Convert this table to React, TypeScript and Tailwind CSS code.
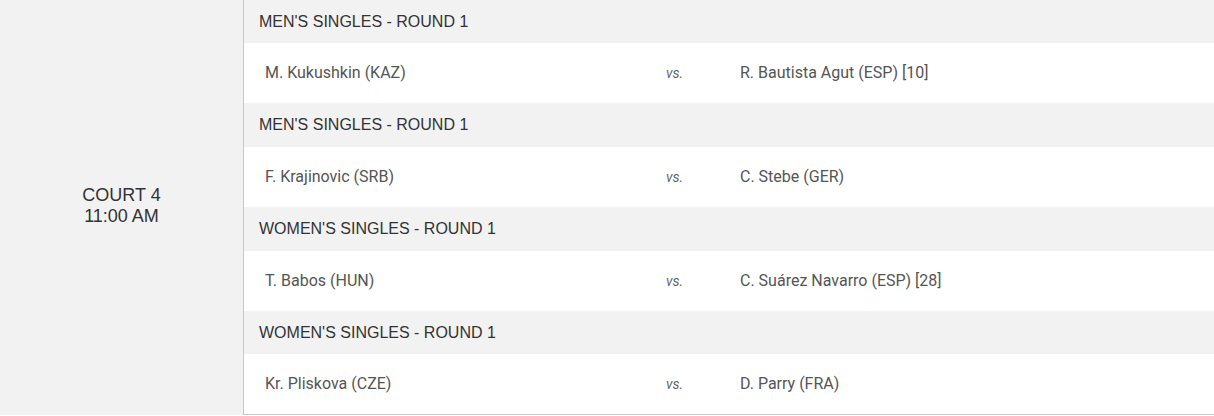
import React from "react";

const matches = [
  { round: "MEN'S SINGLES - ROUND 1", a: "M. Kukushkin (KAZ)", b: "R. Bautista Agut (ESP) [10]", h: "h-[43px]" },
  { round: "MEN'S SINGLES - ROUND 1", a: "F. Krajinovic (SRB)", b: "C. Stebe (GER)", h: "h-[44px]" },
  { round: "WOMEN'S SINGLES - ROUND 1", a: "T. Babos (HUN)", b: "C. Suárez Navarro (ESP) [28]", h: "h-[44px]" },
  { round: "WOMEN'S SINGLES - ROUND 1", a: "Kr. Pliskova (CZE)", b: "D. Parry (FRA)", h: "h-[43px]" },
];

export default function App() {
  return (
    <div className="flex w-[1214px] bg-white">
      <div className="w-[243px] bg-[#f2f2f2] flex flex-col items-center justify-center text-[18px] leading-[21px] text-[#333] pb-[4px]" style={{ fontFamily: '"Liberation Sans", Arial, sans-serif' }}>
        <div>COURT 4</div>
        <div>11:00 AM</div>
      </div>
      <div className="flex-1 border-l border-b border-[#c8c8c8] flex flex-col">
        {matches.map((m, i) => (
          <React.Fragment key={i}>
            <div
              className={`${m.h} bg-[#f2f2f2] flex items-center pl-[15px] text-[16px] text-[#333]`}
              style={{ fontFamily: '"Liberation Sans", Arial, sans-serif' }}
            >
              {m.round}
            </div>
            <div className="h-[60px] bg-white flex items-center text-[16px] text-[#555]" style={{ fontFamily: 'Roboto, "Noto Sans", sans-serif' }}>
              <div className="w-[422px] pl-[21px]">{m.a}</div>
              <div className="w-[74px] italic text-[14px] text-[#666]">vs.</div>
              <div>{m.b}</div>
            </div>
          </React.Fragment>
        ))}
      </div>
    </div>
  );
}
